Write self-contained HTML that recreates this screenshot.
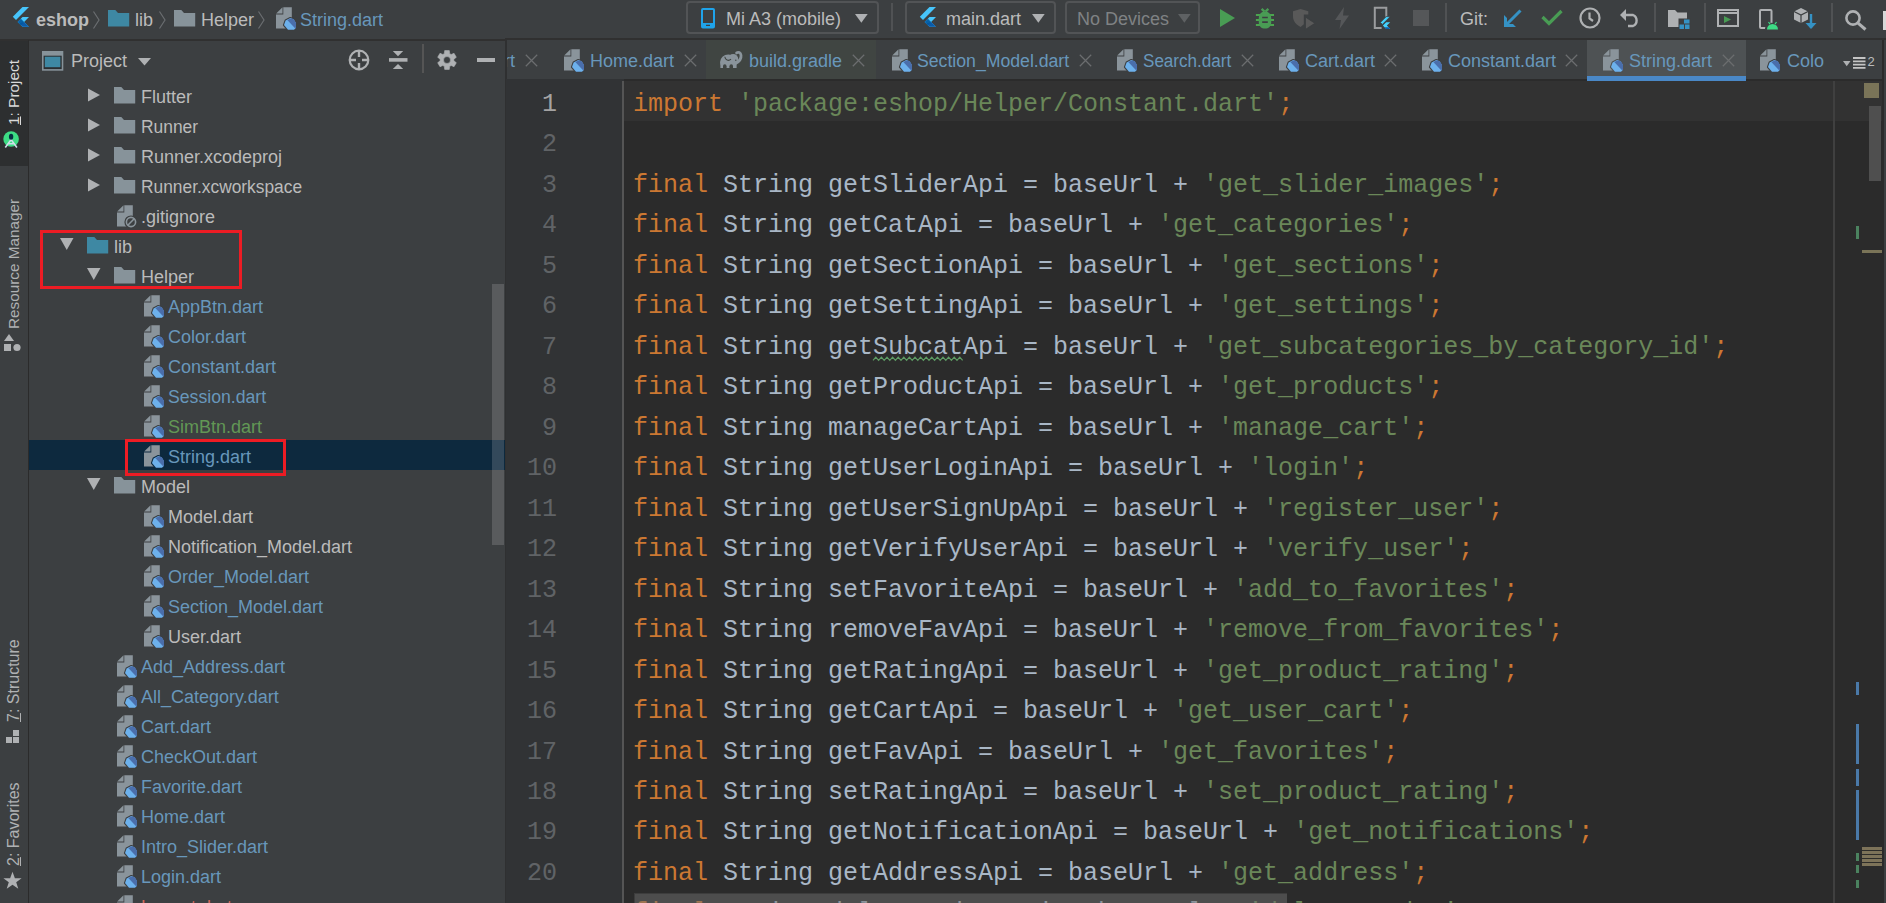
<!DOCTYPE html><html><head><meta charset="utf-8"><style>
*{margin:0;padding:0;box-sizing:border-box}
html,body{width:1886px;height:903px;overflow:hidden;background:#3C3F41;font-family:"Liberation Sans", sans-serif;}
.a{position:absolute}
.t{position:absolute;white-space:pre;font-size:18px;line-height:30px;color:#BBBBBB}
.c{position:absolute;white-space:pre;font-family:"Liberation Mono", monospace;font-size:25px;line-height:40.47px;color:#A9B7C6;left:633px}
.k{color:#CC7832} .s{color:#6A8759}
.ln{position:absolute;white-space:pre;font-family:"Liberation Mono", monospace;font-size:25px;line-height:40.47px;color:#606366;text-align:right;width:60px;left:497px}
svg{position:absolute;overflow:visible}
</style></head><body>

<div class="a" style="left:0;top:0;width:1886px;height:38px;background:#3C3F41"></div>
<div class="a" style="left:505px;top:38px;width:1381px;height:2px;background:#303030"></div>
<div class="a" style="left:0;top:39px;width:507px;height:2px;background:#303030"></div>
<div class="a" style="left:0;top:41px;width:28px;height:862px;background:#3C3F41"></div>
<div class="a" style="left:0;top:41px;width:28px;height:125px;background:#2D2F30"></div>
<div class="a" style="left:28px;top:40px;width:1px;height:863px;background:#2B2B2B"></div>
<div class="a" style="left:29px;top:41px;width:476px;height:862px;background:#3C3F41"></div>
<div class="a" style="left:505px;top:40px;width:2px;height:863px;background:#2F3031"></div>
<div class="a" style="left:507px;top:40px;width:1379px;height:39px;background:#3C3F41"></div>
<div class="a" style="left:506px;top:79px;width:118px;height:824px;background:#313335"></div>
<div class="a" style="left:624px;top:79px;width:1258px;height:824px;background:#2B2B2B"></div>
<div class="a" style="left:1882px;top:40px;width:2px;height:863px;background:#2B2B2B"></div>
<div class="a" style="left:1884px;top:40px;width:2px;height:863px;background:#3C3F41"></div>
<div class="a" style="left:624px;top:81px;width:1258px;height:40px;background:#323232"></div>
<div class="a" style="left:1833px;top:81px;width:2px;height:822px;background:#404040"></div>
<div class="a" style="left:622px;top:81px;width:2px;height:822px;background:#555555"></div>
<div class="ln" style="top:85.00px;color:#A4A3A3">1</div>
<div class="c" style="top:85.00px"><span class="k">import</span> <span class="s">'package:eshop/Helper/Constant.dart'</span><span class="k">;</span></div>
<div class="ln" style="top:125.47px;color:#606366">2</div>
<div class="ln" style="top:165.94px;color:#606366">3</div>
<div class="c" style="top:165.94px"><span class="k">final</span> String getSliderApi = baseUrl + <span class="s">'get_slider_images'</span><span class="k">;</span></div>
<div class="ln" style="top:206.41px;color:#606366">4</div>
<div class="c" style="top:206.41px"><span class="k">final</span> String getCatApi = baseUrl + <span class="s">'get_categories'</span><span class="k">;</span></div>
<div class="ln" style="top:246.88px;color:#606366">5</div>
<div class="c" style="top:246.88px"><span class="k">final</span> String getSectionApi = baseUrl + <span class="s">'get_sections'</span><span class="k">;</span></div>
<div class="ln" style="top:287.35px;color:#606366">6</div>
<div class="c" style="top:287.35px"><span class="k">final</span> String getSettingApi = baseUrl + <span class="s">'get_settings'</span><span class="k">;</span></div>
<div class="ln" style="top:327.82px;color:#606366">7</div>
<div class="c" style="top:327.82px"><span class="k">final</span> String getSubcatApi = baseUrl + <span class="s">'get_subcategories_by_category_id'</span><span class="k">;</span></div>
<div class="ln" style="top:368.29px;color:#606366">8</div>
<div class="c" style="top:368.29px"><span class="k">final</span> String getProductApi = baseUrl + <span class="s">'get_products'</span><span class="k">;</span></div>
<div class="ln" style="top:408.76px;color:#606366">9</div>
<div class="c" style="top:408.76px"><span class="k">final</span> String manageCartApi = baseUrl + <span class="s">'manage_cart'</span><span class="k">;</span></div>
<div class="ln" style="top:449.23px;color:#606366">10</div>
<div class="c" style="top:449.23px"><span class="k">final</span> String getUserLoginApi = baseUrl + <span class="s">'login'</span><span class="k">;</span></div>
<div class="ln" style="top:489.70px;color:#606366">11</div>
<div class="c" style="top:489.70px"><span class="k">final</span> String getUserSignUpApi = baseUrl + <span class="s">'register_user'</span><span class="k">;</span></div>
<div class="ln" style="top:530.17px;color:#606366">12</div>
<div class="c" style="top:530.17px"><span class="k">final</span> String getVerifyUserApi = baseUrl + <span class="s">'verify_user'</span><span class="k">;</span></div>
<div class="ln" style="top:570.64px;color:#606366">13</div>
<div class="c" style="top:570.64px"><span class="k">final</span> String setFavoriteApi = baseUrl + <span class="s">'add_to_favorites'</span><span class="k">;</span></div>
<div class="ln" style="top:611.11px;color:#606366">14</div>
<div class="c" style="top:611.11px"><span class="k">final</span> String removeFavApi = baseUrl + <span class="s">'remove_from_favorites'</span><span class="k">;</span></div>
<div class="ln" style="top:651.58px;color:#606366">15</div>
<div class="c" style="top:651.58px"><span class="k">final</span> String getRatingApi = baseUrl + <span class="s">'get_product_rating'</span><span class="k">;</span></div>
<div class="ln" style="top:692.05px;color:#606366">16</div>
<div class="c" style="top:692.05px"><span class="k">final</span> String getCartApi = baseUrl + <span class="s">'get_user_cart'</span><span class="k">;</span></div>
<div class="ln" style="top:732.52px;color:#606366">17</div>
<div class="c" style="top:732.52px"><span class="k">final</span> String getFavApi = baseUrl + <span class="s">'get_favorites'</span><span class="k">;</span></div>
<div class="ln" style="top:772.99px;color:#606366">18</div>
<div class="c" style="top:772.99px"><span class="k">final</span> String setRatingApi = baseUrl + <span class="s">'set_product_rating'</span><span class="k">;</span></div>
<div class="ln" style="top:813.46px;color:#606366">19</div>
<div class="c" style="top:813.46px"><span class="k">final</span> String getNotificationApi = baseUrl + <span class="s">'get_notifications'</span><span class="k">;</span></div>
<div class="ln" style="top:853.93px;color:#606366">20</div>
<div class="c" style="top:853.93px"><span class="k">final</span> String getAddressApi = baseUrl + <span class="s">'get_address'</span><span class="k">;</span></div>
<div class="c" style="top:894.40px"><span class="k">final</span> String deleteOrdersApi = baseUrl + <span class="s">'delete_order'</span><span class="k">;</span></div>
<svg style="left:0;top:0" width="1" height="1"><path d="M873 360.3 L875.8 357.2 L878.6 360.3 L881.4 357.2 L884.2 360.3 L887.0 357.2 L889.8 360.3 L892.6 357.2 L895.4 360.3 L898.2 357.2 L901.0 360.3 L903.8 357.2 L906.6 360.3 L909.4 357.2 L912.2 360.3 L915.0 357.2 L917.8 360.3 L920.6 357.2 L923.4 360.3 L926.2 357.2 L929.0 360.3 L931.8 357.2 L934.6 360.3 L937.4 357.2 L940.2 360.3 L943.0 357.2 L945.8 360.3 L948.6 357.2 L951.4 360.3 L954.2 357.2 L957.0 360.3 L959.8 357.2 L962.6 360.3" stroke="#5E9C64" stroke-width="1.2" fill="none"/></svg>
<div class="a" style="left:634px;top:893px;width:653px;height:10px;background:rgba(112,112,112,0.5);border-left:1px solid rgba(0,0,0,0.2);border-top:1px solid rgba(0,0,0,0.2)"></div>
<div class="a" style="left:1864px;top:83px;width:15px;height:15px;background:#7A7458"></div>
<div class="a" style="left:1869px;top:106px;width:12px;height:75px;background:#4F4F4F"></div>
<div class="a" style="left:1856px;top:226px;width:3px;height:13px;background:#4B825F"></div>
<div class="a" style="left:1856px;top:682px;width:3px;height:13px;background:#4A79A8"></div>
<div class="a" style="left:1856px;top:724px;width:3px;height:40px;background:#4A79A8"></div>
<div class="a" style="left:1856px;top:769px;width:3px;height:17px;background:#4A79A8"></div>
<div class="a" style="left:1856px;top:790px;width:3px;height:50px;background:#4A79A8"></div>
<div class="a" style="left:1856px;top:853px;width:3px;height:8px;background:#4B825F"></div>
<div class="a" style="left:1856px;top:865px;width:3px;height:8px;background:#4B825F"></div>
<div class="a" style="left:1856px;top:880px;width:3px;height:8px;background:#4B825F"></div>
<div class="a" style="left:1862px;top:250px;width:20px;height:3px;background:#7A7458"></div>
<div class="a" style="left:1862px;top:847px;width:20px;height:19px;background:#2E2D2A"></div>
<div class="a" style="left:1862px;top:847.3px;width:20px;height:3px;background:#7D7359"></div>
<div class="a" style="left:1862px;top:850.6px;width:20px;height:3px;background:#7D7359"></div>
<div class="a" style="left:1862px;top:854.9px;width:20px;height:3px;background:#7D7359"></div>
<div class="a" style="left:1862px;top:859.3px;width:20px;height:3px;background:#7D7359"></div>
<div class="a" style="left:1862px;top:862.6px;width:20px;height:3px;background:#7D7359"></div>
<div class="a" style="left:29px;top:440px;width:476px;height:30px;background:#0D293E"></div>
<div class="a" style="left:492px;top:284px;width:12px;height:261px;background:#595B5D"></div>
<div class="a" style="left:492px;top:440px;width:12px;height:30px;background:#33495B"></div>
<svg style="left:87.8px;top:87.5px" width="13" height="14"><path d="M0 0.5L12 7L0 13.5Z" fill="#AFB1B3"/></svg>
<svg style="left:114.4px;top:87px" width="22" height="17" fill="#87939A"><path d="M0 0H7.3L10 2.9H21.2V16.4H0Z"/></svg>
<div class="t" style="left:141px;top:81.8px;color:#BBBBBB">Flutter</div>
<svg style="left:87.8px;top:117.5px" width="13" height="14"><path d="M0 0.5L12 7L0 13.5Z" fill="#AFB1B3"/></svg>
<svg style="left:114.4px;top:117px" width="22" height="17" fill="#87939A"><path d="M0 0H7.3L10 2.9H21.2V16.4H0Z"/></svg>
<div class="t" style="left:141px;top:111.8px;color:#BBBBBB;transform:scaleX(0.967);transform-origin:0 0">Runner</div>
<svg style="left:87.8px;top:147.5px" width="13" height="14"><path d="M0 0.5L12 7L0 13.5Z" fill="#AFB1B3"/></svg>
<svg style="left:114.4px;top:147px" width="22" height="17" fill="#87939A"><path d="M0 0H7.3L10 2.9H21.2V16.4H0Z"/></svg>
<div class="t" style="left:141px;top:141.8px;color:#BBBBBB">Runner.xcodeproj</div>
<svg style="left:87.8px;top:177.5px" width="13" height="14"><path d="M0 0.5L12 7L0 13.5Z" fill="#AFB1B3"/></svg>
<svg style="left:114.4px;top:177px" width="22" height="17" fill="#87939A"><path d="M0 0H7.3L10 2.9H21.2V16.4H0Z"/></svg>
<div class="t" style="left:141px;top:171.8px;color:#BBBBBB;transform:scaleX(0.964);transform-origin:0 0">Runner.xcworkspace</div>
<svg style="left:117px;top:205px" width="22" height="24"><path fill="#8A949B" d="M7.3 0.3H15.8V21.6H0V7.6H7.3Z"/><path fill="#8A949B" d="M0.2 6.6L6.5 0.3V6.6Z"/><circle cx="14" cy="17" r="6.6" fill="#3C3F41"/><circle cx="14" cy="17" r="4.6" fill="none" stroke="#8A949B" stroke-width="1.6"/><path d="M10.8 20.2L17.2 13.8" stroke="#8A949B" stroke-width="1.6"/></svg>
<div class="t" style="left:141px;top:201.8px;color:#BBBBBB">.gitignore</div>
<svg style="left:60px;top:238px" width="14" height="13"><path d="M0 0L13.5 0L6.75 12Z" fill="#AFB1B3"/></svg>
<svg style="left:87.4px;top:237px" width="22" height="17" fill="#3E88A3"><path d="M0 0H7.3L10 2.9H21.2V16.4H0Z"/></svg>
<div class="t" style="left:114px;top:231.8px;color:#BBBBBB">lib</div>
<svg style="left:87px;top:268px" width="14" height="13"><path d="M0 0L13.5 0L6.75 12Z" fill="#AFB1B3"/></svg>
<svg style="left:114.4px;top:267px" width="22" height="17" fill="#87939A"><path d="M0 0H7.3L10 2.9H21.2V16.4H0Z"/></svg>
<div class="t" style="left:141px;top:261.8px;color:#BBBBBB">Helper</div>
<svg style="left:144px;top:295px" width="22" height="24"><path fill="#8A949B" d="M7.3 0.3H15.8V21.6H0V7.6H7.3Z"/><path fill="#8A949B" d="M0.2 6.6L6.5 0.3V6.6Z"/><path d="M14.3 11L17.5 12.3L20 16.3V20.8L18 22.8H12L8 18L9.6 13.5Z" fill="var(--bg,#3C3F41)" stroke="var(--bg,#3C3F41)" stroke-width="2.2" stroke-linejoin="round"/><path d="M14.3 11L17.5 12.3L20 16.3V20.8L18 22.8H12L8 18L9.6 13.5Z" fill="#6DB1EC"/><path d="M11.3 13.1L15.2 11.3L18 12.5L20 16V20.6L19.3 21.4Z" fill="#4A6EAB"/></svg>
<div class="t" style="left:168px;top:291.8px;color:#6897BB">AppBtn.dart</div>
<svg style="left:144px;top:325px" width="22" height="24"><path fill="#8A949B" d="M7.3 0.3H15.8V21.6H0V7.6H7.3Z"/><path fill="#8A949B" d="M0.2 6.6L6.5 0.3V6.6Z"/><path d="M14.3 11L17.5 12.3L20 16.3V20.8L18 22.8H12L8 18L9.6 13.5Z" fill="var(--bg,#3C3F41)" stroke="var(--bg,#3C3F41)" stroke-width="2.2" stroke-linejoin="round"/><path d="M14.3 11L17.5 12.3L20 16.3V20.8L18 22.8H12L8 18L9.6 13.5Z" fill="#6DB1EC"/><path d="M11.3 13.1L15.2 11.3L18 12.5L20 16V20.6L19.3 21.4Z" fill="#4A6EAB"/></svg>
<div class="t" style="left:168px;top:321.8px;color:#6897BB">Color.dart</div>
<svg style="left:144px;top:355px" width="22" height="24"><path fill="#8A949B" d="M7.3 0.3H15.8V21.6H0V7.6H7.3Z"/><path fill="#8A949B" d="M0.2 6.6L6.5 0.3V6.6Z"/><path d="M14.3 11L17.5 12.3L20 16.3V20.8L18 22.8H12L8 18L9.6 13.5Z" fill="var(--bg,#3C3F41)" stroke="var(--bg,#3C3F41)" stroke-width="2.2" stroke-linejoin="round"/><path d="M14.3 11L17.5 12.3L20 16.3V20.8L18 22.8H12L8 18L9.6 13.5Z" fill="#6DB1EC"/><path d="M11.3 13.1L15.2 11.3L18 12.5L20 16V20.6L19.3 21.4Z" fill="#4A6EAB"/></svg>
<div class="t" style="left:168px;top:351.8px;color:#6897BB">Constant.dart</div>
<svg style="left:144px;top:385px" width="22" height="24"><path fill="#8A949B" d="M7.3 0.3H15.8V21.6H0V7.6H7.3Z"/><path fill="#8A949B" d="M0.2 6.6L6.5 0.3V6.6Z"/><path d="M14.3 11L17.5 12.3L20 16.3V20.8L18 22.8H12L8 18L9.6 13.5Z" fill="var(--bg,#3C3F41)" stroke="var(--bg,#3C3F41)" stroke-width="2.2" stroke-linejoin="round"/><path d="M14.3 11L17.5 12.3L20 16.3V20.8L18 22.8H12L8 18L9.6 13.5Z" fill="#6DB1EC"/><path d="M11.3 13.1L15.2 11.3L18 12.5L20 16V20.6L19.3 21.4Z" fill="#4A6EAB"/></svg>
<div class="t" style="left:168px;top:381.8px;color:#6897BB;transform:scaleX(0.98);transform-origin:0 0">Session.dart</div>
<svg style="left:144px;top:415px" width="22" height="24"><path fill="#8A949B" d="M7.3 0.3H15.8V21.6H0V7.6H7.3Z"/><path fill="#8A949B" d="M0.2 6.6L6.5 0.3V6.6Z"/><path d="M14.3 11L17.5 12.3L20 16.3V20.8L18 22.8H12L8 18L9.6 13.5Z" fill="var(--bg,#3C3F41)" stroke="var(--bg,#3C3F41)" stroke-width="2.2" stroke-linejoin="round"/><path d="M14.3 11L17.5 12.3L20 16.3V20.8L18 22.8H12L8 18L9.6 13.5Z" fill="#6DB1EC"/><path d="M11.3 13.1L15.2 11.3L18 12.5L20 16V20.6L19.3 21.4Z" fill="#4A6EAB"/></svg>
<div class="t" style="left:168px;top:411.8px;color:#629755">SimBtn.dart</div>
<svg style="left:144px;top:445px;--bg:#0D293E" width="22" height="24"><path fill="#8A949B" d="M7.3 0.3H15.8V21.6H0V7.6H7.3Z"/><path fill="#8A949B" d="M0.2 6.6L6.5 0.3V6.6Z"/><path d="M14.3 11L17.5 12.3L20 16.3V20.8L18 22.8H12L8 18L9.6 13.5Z" fill="var(--bg,#3C3F41)" stroke="var(--bg,#3C3F41)" stroke-width="2.2" stroke-linejoin="round"/><path d="M14.3 11L17.5 12.3L20 16.3V20.8L18 22.8H12L8 18L9.6 13.5Z" fill="#6DB1EC"/><path d="M11.3 13.1L15.2 11.3L18 12.5L20 16V20.6L19.3 21.4Z" fill="#4A6EAB"/></svg>
<div class="t" style="left:168px;top:441.8px;color:#6897BB">String.dart</div>
<svg style="left:87px;top:478px" width="14" height="13"><path d="M0 0L13.5 0L6.75 12Z" fill="#AFB1B3"/></svg>
<svg style="left:114.4px;top:477px" width="22" height="17" fill="#87939A"><path d="M0 0H7.3L10 2.9H21.2V16.4H0Z"/></svg>
<div class="t" style="left:141px;top:471.8px;color:#BBBBBB">Model</div>
<svg style="left:144px;top:505px" width="22" height="24"><path fill="#8A949B" d="M7.3 0.3H15.8V21.6H0V7.6H7.3Z"/><path fill="#8A949B" d="M0.2 6.6L6.5 0.3V6.6Z"/><path d="M14.3 11L17.5 12.3L20 16.3V20.8L18 22.8H12L8 18L9.6 13.5Z" fill="var(--bg,#3C3F41)" stroke="var(--bg,#3C3F41)" stroke-width="2.2" stroke-linejoin="round"/><path d="M14.3 11L17.5 12.3L20 16.3V20.8L18 22.8H12L8 18L9.6 13.5Z" fill="#6DB1EC"/><path d="M11.3 13.1L15.2 11.3L18 12.5L20 16V20.6L19.3 21.4Z" fill="#4A6EAB"/></svg>
<div class="t" style="left:168px;top:501.8px;color:#BBBBBB">Model.dart</div>
<svg style="left:144px;top:535px" width="22" height="24"><path fill="#8A949B" d="M7.3 0.3H15.8V21.6H0V7.6H7.3Z"/><path fill="#8A949B" d="M0.2 6.6L6.5 0.3V6.6Z"/><path d="M14.3 11L17.5 12.3L20 16.3V20.8L18 22.8H12L8 18L9.6 13.5Z" fill="var(--bg,#3C3F41)" stroke="var(--bg,#3C3F41)" stroke-width="2.2" stroke-linejoin="round"/><path d="M14.3 11L17.5 12.3L20 16.3V20.8L18 22.8H12L8 18L9.6 13.5Z" fill="#6DB1EC"/><path d="M11.3 13.1L15.2 11.3L18 12.5L20 16V20.6L19.3 21.4Z" fill="#4A6EAB"/></svg>
<div class="t" style="left:168px;top:531.8px;color:#BBBBBB">Notification_Model.dart</div>
<svg style="left:144px;top:565px" width="22" height="24"><path fill="#8A949B" d="M7.3 0.3H15.8V21.6H0V7.6H7.3Z"/><path fill="#8A949B" d="M0.2 6.6L6.5 0.3V6.6Z"/><path d="M14.3 11L17.5 12.3L20 16.3V20.8L18 22.8H12L8 18L9.6 13.5Z" fill="var(--bg,#3C3F41)" stroke="var(--bg,#3C3F41)" stroke-width="2.2" stroke-linejoin="round"/><path d="M14.3 11L17.5 12.3L20 16.3V20.8L18 22.8H12L8 18L9.6 13.5Z" fill="#6DB1EC"/><path d="M11.3 13.1L15.2 11.3L18 12.5L20 16V20.6L19.3 21.4Z" fill="#4A6EAB"/></svg>
<div class="t" style="left:168px;top:561.8px;color:#6897BB">Order_Model.dart</div>
<svg style="left:144px;top:595px" width="22" height="24"><path fill="#8A949B" d="M7.3 0.3H15.8V21.6H0V7.6H7.3Z"/><path fill="#8A949B" d="M0.2 6.6L6.5 0.3V6.6Z"/><path d="M14.3 11L17.5 12.3L20 16.3V20.8L18 22.8H12L8 18L9.6 13.5Z" fill="var(--bg,#3C3F41)" stroke="var(--bg,#3C3F41)" stroke-width="2.2" stroke-linejoin="round"/><path d="M14.3 11L17.5 12.3L20 16.3V20.8L18 22.8H12L8 18L9.6 13.5Z" fill="#6DB1EC"/><path d="M11.3 13.1L15.2 11.3L18 12.5L20 16V20.6L19.3 21.4Z" fill="#4A6EAB"/></svg>
<div class="t" style="left:168px;top:591.8px;color:#6897BB">Section_Model.dart</div>
<svg style="left:144px;top:625px" width="22" height="24"><path fill="#8A949B" d="M7.3 0.3H15.8V21.6H0V7.6H7.3Z"/><path fill="#8A949B" d="M0.2 6.6L6.5 0.3V6.6Z"/><path d="M14.3 11L17.5 12.3L20 16.3V20.8L18 22.8H12L8 18L9.6 13.5Z" fill="var(--bg,#3C3F41)" stroke="var(--bg,#3C3F41)" stroke-width="2.2" stroke-linejoin="round"/><path d="M14.3 11L17.5 12.3L20 16.3V20.8L18 22.8H12L8 18L9.6 13.5Z" fill="#6DB1EC"/><path d="M11.3 13.1L15.2 11.3L18 12.5L20 16V20.6L19.3 21.4Z" fill="#4A6EAB"/></svg>
<div class="t" style="left:168px;top:621.8px;color:#BBBBBB">User.dart</div>
<svg style="left:117px;top:655px" width="22" height="24"><path fill="#8A949B" d="M7.3 0.3H15.8V21.6H0V7.6H7.3Z"/><path fill="#8A949B" d="M0.2 6.6L6.5 0.3V6.6Z"/><path d="M14.3 11L17.5 12.3L20 16.3V20.8L18 22.8H12L8 18L9.6 13.5Z" fill="var(--bg,#3C3F41)" stroke="var(--bg,#3C3F41)" stroke-width="2.2" stroke-linejoin="round"/><path d="M14.3 11L17.5 12.3L20 16.3V20.8L18 22.8H12L8 18L9.6 13.5Z" fill="#6DB1EC"/><path d="M11.3 13.1L15.2 11.3L18 12.5L20 16V20.6L19.3 21.4Z" fill="#4A6EAB"/></svg>
<div class="t" style="left:141px;top:651.8px;color:#6897BB">Add_Address.dart</div>
<svg style="left:117px;top:685px" width="22" height="24"><path fill="#8A949B" d="M7.3 0.3H15.8V21.6H0V7.6H7.3Z"/><path fill="#8A949B" d="M0.2 6.6L6.5 0.3V6.6Z"/><path d="M14.3 11L17.5 12.3L20 16.3V20.8L18 22.8H12L8 18L9.6 13.5Z" fill="var(--bg,#3C3F41)" stroke="var(--bg,#3C3F41)" stroke-width="2.2" stroke-linejoin="round"/><path d="M14.3 11L17.5 12.3L20 16.3V20.8L18 22.8H12L8 18L9.6 13.5Z" fill="#6DB1EC"/><path d="M11.3 13.1L15.2 11.3L18 12.5L20 16V20.6L19.3 21.4Z" fill="#4A6EAB"/></svg>
<div class="t" style="left:141px;top:681.8px;color:#6897BB">All_Category.dart</div>
<svg style="left:117px;top:715px" width="22" height="24"><path fill="#8A949B" d="M7.3 0.3H15.8V21.6H0V7.6H7.3Z"/><path fill="#8A949B" d="M0.2 6.6L6.5 0.3V6.6Z"/><path d="M14.3 11L17.5 12.3L20 16.3V20.8L18 22.8H12L8 18L9.6 13.5Z" fill="var(--bg,#3C3F41)" stroke="var(--bg,#3C3F41)" stroke-width="2.2" stroke-linejoin="round"/><path d="M14.3 11L17.5 12.3L20 16.3V20.8L18 22.8H12L8 18L9.6 13.5Z" fill="#6DB1EC"/><path d="M11.3 13.1L15.2 11.3L18 12.5L20 16V20.6L19.3 21.4Z" fill="#4A6EAB"/></svg>
<div class="t" style="left:141px;top:711.8px;color:#6897BB">Cart.dart</div>
<svg style="left:117px;top:745px" width="22" height="24"><path fill="#8A949B" d="M7.3 0.3H15.8V21.6H0V7.6H7.3Z"/><path fill="#8A949B" d="M0.2 6.6L6.5 0.3V6.6Z"/><path d="M14.3 11L17.5 12.3L20 16.3V20.8L18 22.8H12L8 18L9.6 13.5Z" fill="var(--bg,#3C3F41)" stroke="var(--bg,#3C3F41)" stroke-width="2.2" stroke-linejoin="round"/><path d="M14.3 11L17.5 12.3L20 16.3V20.8L18 22.8H12L8 18L9.6 13.5Z" fill="#6DB1EC"/><path d="M11.3 13.1L15.2 11.3L18 12.5L20 16V20.6L19.3 21.4Z" fill="#4A6EAB"/></svg>
<div class="t" style="left:141px;top:741.8px;color:#6897BB">CheckOut.dart</div>
<svg style="left:117px;top:775px" width="22" height="24"><path fill="#8A949B" d="M7.3 0.3H15.8V21.6H0V7.6H7.3Z"/><path fill="#8A949B" d="M0.2 6.6L6.5 0.3V6.6Z"/><path d="M14.3 11L17.5 12.3L20 16.3V20.8L18 22.8H12L8 18L9.6 13.5Z" fill="var(--bg,#3C3F41)" stroke="var(--bg,#3C3F41)" stroke-width="2.2" stroke-linejoin="round"/><path d="M14.3 11L17.5 12.3L20 16.3V20.8L18 22.8H12L8 18L9.6 13.5Z" fill="#6DB1EC"/><path d="M11.3 13.1L15.2 11.3L18 12.5L20 16V20.6L19.3 21.4Z" fill="#4A6EAB"/></svg>
<div class="t" style="left:141px;top:771.8px;color:#6897BB">Favorite.dart</div>
<svg style="left:117px;top:805px" width="22" height="24"><path fill="#8A949B" d="M7.3 0.3H15.8V21.6H0V7.6H7.3Z"/><path fill="#8A949B" d="M0.2 6.6L6.5 0.3V6.6Z"/><path d="M14.3 11L17.5 12.3L20 16.3V20.8L18 22.8H12L8 18L9.6 13.5Z" fill="var(--bg,#3C3F41)" stroke="var(--bg,#3C3F41)" stroke-width="2.2" stroke-linejoin="round"/><path d="M14.3 11L17.5 12.3L20 16.3V20.8L18 22.8H12L8 18L9.6 13.5Z" fill="#6DB1EC"/><path d="M11.3 13.1L15.2 11.3L18 12.5L20 16V20.6L19.3 21.4Z" fill="#4A6EAB"/></svg>
<div class="t" style="left:141px;top:801.8px;color:#6897BB">Home.dart</div>
<svg style="left:117px;top:835px" width="22" height="24"><path fill="#8A949B" d="M7.3 0.3H15.8V21.6H0V7.6H7.3Z"/><path fill="#8A949B" d="M0.2 6.6L6.5 0.3V6.6Z"/><path d="M14.3 11L17.5 12.3L20 16.3V20.8L18 22.8H12L8 18L9.6 13.5Z" fill="var(--bg,#3C3F41)" stroke="var(--bg,#3C3F41)" stroke-width="2.2" stroke-linejoin="round"/><path d="M14.3 11L17.5 12.3L20 16.3V20.8L18 22.8H12L8 18L9.6 13.5Z" fill="#6DB1EC"/><path d="M11.3 13.1L15.2 11.3L18 12.5L20 16V20.6L19.3 21.4Z" fill="#4A6EAB"/></svg>
<div class="t" style="left:141px;top:831.8px;color:#6897BB">Intro_Slider.dart</div>
<svg style="left:117px;top:865px" width="22" height="24"><path fill="#8A949B" d="M7.3 0.3H15.8V21.6H0V7.6H7.3Z"/><path fill="#8A949B" d="M0.2 6.6L6.5 0.3V6.6Z"/><path d="M14.3 11L17.5 12.3L20 16.3V20.8L18 22.8H12L8 18L9.6 13.5Z" fill="var(--bg,#3C3F41)" stroke="var(--bg,#3C3F41)" stroke-width="2.2" stroke-linejoin="round"/><path d="M14.3 11L17.5 12.3L20 16.3V20.8L18 22.8H12L8 18L9.6 13.5Z" fill="#6DB1EC"/><path d="M11.3 13.1L15.2 11.3L18 12.5L20 16V20.6L19.3 21.4Z" fill="#4A6EAB"/></svg>
<div class="t" style="left:141px;top:861.8px;color:#6897BB">Login.dart</div>
<svg style="left:117px;top:895px" width="22" height="24"><path fill="#8A949B" d="M7.3 0.3H15.8V21.6H0V7.6H7.3Z"/><path fill="#8A949B" d="M0.2 6.6L6.5 0.3V6.6Z"/><path d="M14.3 11L17.5 12.3L20 16.3V20.8L18 22.8H12L8 18L9.6 13.5Z" fill="var(--bg,#3C3F41)" stroke="var(--bg,#3C3F41)" stroke-width="2.2" stroke-linejoin="round"/><path d="M14.3 11L17.5 12.3L20 16.3V20.8L18 22.8H12L8 18L9.6 13.5Z" fill="#6DB1EC"/><path d="M11.3 13.1L15.2 11.3L18 12.5L20 16V20.6L19.3 21.4Z" fill="#4A6EAB"/></svg>
<div class="t" style="left:141px;top:891.8px;color:#D1675A">Logout.dart</div>
<div class="a" style="left:40px;top:230px;width:202px;height:59px;border:3px solid #ED1C24"></div>
<div class="a" style="left:125px;top:439px;width:161px;height:37px;border:3px solid #ED1C24"></div>
<svg style="left:42.4px;top:51px" width="22" height="20"><rect x="0" y="0" width="21.3" height="19.7" fill="#87939A"/><rect x="1.6" y="4.7" width="18.1" height="13.4" fill="#2B2E30"/><rect x="2.8" y="5.7" width="15.6" height="10.5" fill="#3E88A3"/></svg>
<div class="t" style="left:71px;top:45.8px">Project</div>
<svg style="left:137.5px;top:58px" width="14" height="9"><path d="M0 0H13L6.5 7.5Z" fill="#AFB1B3"/></svg>
<svg style="left:348px;top:49px" width="22" height="22"><circle cx="11" cy="11" r="9.3" fill="none" stroke="#AFB1B3" stroke-width="2.2"/><path d="M11 2V8M11 14V20M2 11H8M14 11H20" stroke="#AFB1B3" stroke-width="2.4"/></svg>
<svg style="left:389px;top:50px" width="19" height="20"><path d="M0 9.9H18.5" stroke="#AFB1B3" stroke-width="3.6"/><path d="M3.8 1H14.2L9 6.2Z M3.8 19.1H14.2L9 13.9Z" fill="#AFB1B3"/></svg>
<div class="a" style="left:422px;top:44px;width:2px;height:29px;background:#555555"></div>
<svg style="left:437px;top:50px" width="20" height="20" viewBox="0 0 20 20"><path fill="#AFB1B3" fill-rule="evenodd" stroke="#AFB1B3" stroke-width="0.6" stroke-linejoin="round" d="M16.85 10.85 L19.31 12.71 L17.01 16.71 L14.16 15.50 L12.69 16.36 L12.31 19.42 L7.69 19.42 L7.31 16.36 L5.84 15.50 L2.99 16.71 L0.69 12.71 L3.15 10.85 L3.15 9.15 L0.69 7.29 L2.99 3.29 L5.84 4.50 L7.31 3.64 L7.69 0.58 L12.31 0.58 L12.69 3.64 L14.16 4.50 L17.01 3.29 L19.31 7.29 L16.85 9.15Z M10 6.5A3.5 3.5 0 1 0 10 13.5A3.5 3.5 0 1 0 10 6.5Z"/></svg>
<div class="a" style="left:477px;top:58.2px;width:18px;height:3.6px;background:#AFB1B3"></div>
<div class="a" style="left:3px;top:125px;width:70px;height:22px;transform-origin:0 0;transform:rotate(-90deg);font-size:15.4px;line-height:22px;color:#DADADA;white-space:pre"><u>1</u>: Project</div>
<svg style="left:2px;top:130px" width="20" height="20"><circle cx="9.1" cy="9" r="7.8" fill="#3DDC84"/><path d="M3.3 17.5L9.1 9.5L14.9 17.5M5.8 13.8H12.4" stroke="#D0DDEA" stroke-width="1.6" fill="none"/><ellipse cx="9.1" cy="6.8" rx="2.2" ry="3" fill="#073042"/></svg>
<div class="a" style="left:3px;top:329px;width:132px;height:22px;transform-origin:0 0;transform:rotate(-90deg);font-size:15.3px;line-height:22px;color:#AFB1B3;white-space:pre">Resource Manager</div>
<svg style="left:4px;top:334px" width="17" height="18"><path d="M5 0L10 7H0Z" fill="#AFB1B3"/><rect x="0" y="10" width="7" height="7" fill="#AFB1B3"/><circle cx="13" cy="13.5" r="3.6" fill="#AFB1B3"/></svg>
<div class="a" style="left:3px;top:722px;width:84px;height:22px;transform-origin:0 0;transform:rotate(-90deg);font-size:16px;line-height:22px;color:#AFB1B3;white-space:pre"><u>7</u>: Structure</div>
<svg style="left:6px;top:730px" width="14" height="14"><rect x="7" y="0" width="6" height="6" fill="#AFB1B3"/><rect x="0" y="7" width="6" height="6" fill="#AFB1B3"/><rect x="7" y="7" width="6" height="6" fill="#AFB1B3"/></svg>
<div class="a" style="left:3px;top:866px;width:82px;height:22px;transform-origin:0 0;transform:rotate(-90deg);font-size:16px;line-height:22px;color:#AFB1B3;white-space:pre"><u>2</u>: Favorites</div>
<svg style="left:3px;top:871px" width="19" height="19" viewBox="0 0 24 24"><path d="M12 1L15 9H23.5L16.7 14.2L19.3 22.5L12 17.4L4.7 22.5L7.3 14.2L0.5 9H9Z" fill="#AFB1B3"/></svg>
<svg style="left:11px;top:7px" width="18" height="22" viewBox="0 0 18 22"><path d="M11.5 0H18L5 13L1.8 9.8Z" fill="#47C5FB"/><path d="M18 10H11.5L6.6 14.9L11.5 19.8H18L13.1 14.9Z" fill="#47C5FB"/><path d="M8.3 16.6L11.5 19.8H18L13.1 14.9Z" fill="#0B5AA8"/><path d="M6.6 14.9L9.9 11.7L13.1 14.9L9.9 18.2Z" fill="#00569E" opacity="0.9"/></svg>
<div class="t" style="left:36px;top:4.5px;font-weight:bold;color:#BBBBBB">eshop</div>
<svg style="left:93px;top:11px" width="7" height="18"><path d="M0.5 0.5L6 9L0.5 17.5" stroke="#6A6D70" stroke-width="1.2" fill="none"/></svg>
<svg style="left:108px;top:9.5px" width="22" height="17" fill="#3E88A3"><path d="M0 0H7.3L10 2.9H21.2V16.4H0Z"/></svg>
<div class="t" style="left:135px;top:4.5px">lib</div>
<svg style="left:159px;top:11px" width="7" height="18"><path d="M0.5 0.5L6 9L0.5 17.5" stroke="#6A6D70" stroke-width="1.2" fill="none"/></svg>
<svg style="left:174px;top:9.5px" width="22" height="17" fill="#87939A"><path d="M0 0H7.3L10 2.9H21.2V16.4H0Z"/></svg>
<div class="t" style="left:201px;top:4.5px">Helper</div>
<svg style="left:258px;top:11px" width="7" height="18"><path d="M0.5 0.5L6 9L0.5 17.5" stroke="#6A6D70" stroke-width="1.2" fill="none"/></svg>
<svg style="left:276px;top:7px" width="22" height="24"><path fill="#8A949B" d="M7.3 0.3H15.8V21.6H0V7.6H7.3Z"/><path fill="#8A949B" d="M0.2 6.6L6.5 0.3V6.6Z"/><path d="M14.3 11L17.5 12.3L20 16.3V20.8L18 22.8H12L8 18L9.6 13.5Z" fill="var(--bg,#3C3F41)" stroke="var(--bg,#3C3F41)" stroke-width="2.2" stroke-linejoin="round"/><path d="M14.3 11L17.5 12.3L20 16.3V20.8L18 22.8H12L8 18L9.6 13.5Z" fill="#6DB1EC"/><path d="M11.3 13.1L15.2 11.3L18 12.5L20 16V20.6L19.3 21.4Z" fill="#4A6EAB"/></svg>
<div class="t" style="left:300px;top:4.5px;color:#6897BB">String.dart</div>
<div class="a" style="left:686px;top:1px;width:193px;height:33px;border:2px solid #525456;border-radius:4px"></div>
<svg style="left:701px;top:7.5px" width="14" height="21"><path fill="#1FA3EA" fill-rule="evenodd" d="M2 0H12A2 2 0 0 1 14 2V18.5A2 2 0 0 1 12 20.5H2A2 2 0 0 1 0 18.5V2A2 2 0 0 1 2 0Z M2 2V15H12V2Z M5 16.8V18H9V16.8Z"/></svg>
<div class="t" style="left:726px;top:3.5px">Mi A3 (mobile)</div>
<svg style="left:855px;top:13.5px" width="13" height="9"><path d="M0 0H12.7L6.35 8.8Z" fill="#AFB1B3"/></svg>
<div class="a" style="left:891px;top:3px;width:2px;height:28px;background:#505254"></div>
<div class="a" style="left:905px;top:1px;width:151px;height:33px;border:2px solid #525456;border-radius:4px"></div>
<svg style="left:918px;top:7px" width="18" height="22" viewBox="0 0 18 22"><path d="M11.5 0H18L5 13L1.8 9.8Z" fill="#47C5FB"/><path d="M18 10H11.5L6.6 14.9L11.5 19.8H18L13.1 14.9Z" fill="#47C5FB"/><path d="M8.3 16.6L11.5 19.8H18L13.1 14.9Z" fill="#0B5AA8"/><path d="M6.6 14.9L9.9 11.7L13.1 14.9L9.9 18.2Z" fill="#00569E" opacity="0.9"/></svg>
<div class="t" style="left:946px;top:3.5px">main.dart</div>
<svg style="left:1032px;top:13.5px" width="13" height="9"><path d="M0 0H12.7L6.35 8.8Z" fill="#AFB1B3"/></svg>
<div class="a" style="left:1065px;top:1px;width:135px;height:33px;border:2px solid #525456;border-radius:4px"></div>
<div class="t" style="left:1077px;top:3.5px;color:#7F8284">No Devices</div>
<svg style="left:1178px;top:13.5px" width="13" height="9"><path d="M0 0H12.7L6.35 8.8Z" fill="#5E6163"/></svg>
<svg style="left:1220px;top:9px" width="15" height="18"><path d="M0 0L15 9L0 18Z" fill="#499C54"/></svg>
<svg style="left:1250px;top:2px" width="70" height="32" viewBox="0 0 70 32"><path d="M11.6 6.8L14.6 9.6M18.4 6.8L15.4 9.6" stroke="#499C54" stroke-width="2.3"/><path d="M5.9 12H24V14H5.9Z M5.9 17H24V19H5.9Z M5.9 22H24V24H5.9Z" fill="#4CAF50" opacity="0.9"/><path d="M15 9.4C19 9.4 21.2 12.5 21.2 16V20.5C21.2 24.3 18.6 26.6 15 26.6C11.4 26.6 8.8 24.3 8.8 20.5V16C8.8 12.5 11 9.4 15 9.4Z" fill="#499C54"/><path d="M12.2 14.7H17.8V16.3H12.2Z M12.2 19.3H17.8V21H12.2Z" fill="#3C3F41"/><path d="M43 9.2L50.6 7L58.3 9.2V12.6H53.8V22.3L50.6 24.9C46.2 22.6 43 19.4 43 14.5Z" fill="#595959"/><path d="M55.3 14.7L65.3 21.2L55.3 27.7Z" fill="#595959" stroke="#3C3F41" stroke-width="1.2"/></svg>
<svg style="left:1335px;top:7px" width="14" height="22"><path d="M9 0L0 13H6L4.5 22L14 8.5H8Z" fill="#555759"/></svg>
<svg style="left:1373px;top:6px" width="18" height="24"><path d="M13.3 10.8V1.8H1.8V22H8.6" stroke="#9A9C9E" stroke-width="2" fill="none"/><path d="M13.2 10.6H17.2L9.4 18.4L7.4 16.4Z" fill="#44D1FD" stroke="#3C3F41" stroke-width="0.8"/><path d="M13.2 16.3H17.2L13.9 19.6L17.2 22.9H13.2L9.9 19.6Z" fill="#44D1FD"/><path d="M11.6 21.3L13.2 22.9H17.2L15.6 21.3Z" fill="#0F5CAB"/></svg>
<div class="a" style="left:1413px;top:10px;width:16px;height:16px;background:#555759"></div>
<div class="a" style="left:1445px;top:3px;width:2px;height:29px;background:#505254"></div>
<div class="t" style="left:1460px;top:3.5px;color:#BBBBBB">Git:</div>
<svg style="left:1504px;top:9px" width="18" height="18"><path d="M16.5 1.5L2.5 15.5" stroke="#3592C4" stroke-width="3"/><path d="M0 6V18H12L9 15H3V9Z" fill="#3592C4"/></svg>
<svg style="left:1541px;top:9px" width="22" height="17"><path d="M1.5 8L8 14.5L20.5 2" stroke="#499C54" stroke-width="3.2" fill="none"/></svg>
<svg style="left:1579px;top:7px" width="22" height="22"><circle cx="11" cy="11" r="9.5" fill="none" stroke="#AFB1B3" stroke-width="2.2"/><path d="M10.5 5.5V11.5L14 14" stroke="#AFB1B3" stroke-width="2.2" fill="none"/></svg>
<svg style="left:1620px;top:8px" width="21" height="19"><path d="M3 7H13A6 6 0 0 1 13 18H8" stroke="#AFB1B3" stroke-width="2.4" fill="none"/><path d="M0 7L6 1V13Z" fill="#AFB1B3"/></svg>
<div class="a" style="left:1654px;top:3px;width:2px;height:29px;background:#505254"></div>
<svg style="left:1668px;top:10px" width="23" height="19"><path d="M0 0H7L9.5 2.5H19V17H0Z" fill="#AFB1B3"/><rect x="10.5" y="8.5" width="12" height="10.5" fill="#3C3F41"/><rect x="16" y="9.5" width="5.5" height="4" fill="#3592C4"/><rect x="11.5" y="14.5" width="4.5" height="4.5" fill="#3592C4"/><rect x="17" y="14.5" width="4.5" height="4.5" fill="#3592C4"/></svg>
<div class="a" style="left:1704px;top:3px;width:2px;height:29px;background:#505254"></div>
<svg style="left:1717px;top:9px" width="22" height="18"><rect x="1" y="1" width="20" height="16" fill="none" stroke="#AFB1B3" stroke-width="2"/><path d="M1 4H21" stroke="#AFB1B3" stroke-width="2"/><path d="M7 7L14 10.5L7 14Z" fill="#499C54"/></svg>
<svg style="left:1759px;top:9px" width="20" height="21"><rect x="1" y="1" width="11.5" height="18" rx="1" fill="none" stroke="#AFB1B3" stroke-width="2"/><path d="M7 21A6 6 0 0 1 19 21Z" fill="#3C3F41" stroke="#3C3F41" stroke-width="2.5"/><path d="M8 20.5A5.5 5.5 0 0 1 19 20.5Z" fill="#3DDC84"/><path d="M9.5 13L11 15.2M17.5 13L16 15.2" stroke="#3DDC84" stroke-width="1.2"/></svg>
<svg style="left:1794px;top:8px" width="25" height="22"><path d="M7 0L14 3.5V11.5L7 15L0 11.5V3.5Z" fill="#AFB1B3"/><path d="M0 3.5L7 7L14 3.5M7 7V15" stroke="#3C3F41" stroke-width="1.2" fill="none"/><path d="M17 6V20" stroke="#3592C4" stroke-width="2.4"/><path d="M11.5 15L17 21L22.5 15Z" fill="#3592C4"/></svg>
<div class="a" style="left:1831px;top:3px;width:2px;height:29px;background:#505254"></div>
<svg style="left:1845px;top:10px" width="22" height="20"><circle cx="8" cy="8" r="6.6" fill="none" stroke="#AFB1B3" stroke-width="2.6"/><path d="M12.8 12.8L20.5 19.5" stroke="#AFB1B3" stroke-width="3"/></svg>
<div class="a" style="left:1883px;top:11px;width:3px;height:19px;background:#D8D8D8"></div>
<div class="a" style="left:706px;top:40px;width:170px;height:39px;background:#404542"></div>
<div class="a" style="left:1587px;top:40px;width:159px;height:39px;background:#4E5254"></div>
<div class="a" style="left:1587px;top:76px;width:159px;height:4.6px;background:#4A88C7"></div>
<div class="a" style="left:507px;top:40px;width:20px;height:39px;overflow:hidden"><div class="t" style="left:-3px;top:5.5px;color:#6897BB">rt</div></div>
<svg style="left:525px;top:53.5px" width="13" height="13"><path d="M0.8 0.8L12.2 12.2M12.2 0.8L0.8 12.2" stroke="#6B6D6F" stroke-width="1.25"/></svg>
<svg style="left:564px;top:49px" width="22" height="24"><path fill="#8A949B" d="M7.3 0.3H15.8V21.6H0V7.6H7.3Z"/><path fill="#8A949B" d="M0.2 6.6L6.5 0.3V6.6Z"/><path d="M14.3 11L17.5 12.3L20 16.3V20.8L18 22.8H12L8 18L9.6 13.5Z" fill="var(--bg,#3C3F41)" stroke="var(--bg,#3C3F41)" stroke-width="2.2" stroke-linejoin="round"/><path d="M14.3 11L17.5 12.3L20 16.3V20.8L18 22.8H12L8 18L9.6 13.5Z" fill="#6DB1EC"/><path d="M11.3 13.1L15.2 11.3L18 12.5L20 16V20.6L19.3 21.4Z" fill="#4A6EAB"/></svg>
<div class="t" style="left:590px;top:45.5px;color:#6897BB">Home.dart</div>
<svg style="left:684px;top:53.5px" width="13" height="13"><path d="M0.8 0.8L12.2 12.2M12.2 0.8L0.8 12.2" stroke="#6B6D6F" stroke-width="1.25"/></svg>
<svg style="left:720px;top:50px" width="24" height="19" viewBox="0 0 24 19"><defs><clipPath id="gcl"><rect x="-1" y="0" width="26" height="17.9"/></clipPath></defs><g clip-path="url(#gcl)" fill="#8A949B"><ellipse cx="8.3" cy="12" rx="8.2" ry="7.6"/><path d="M0.4 12H16.6V18H0.4Z"/><circle cx="13.2" cy="9.2" r="5.1"/><path d="M15.5 13.5C19.3 11.5 21.4 8.3 21 5.1C20.6 2.6 18.4 1.6 16.6 2.9" stroke="#8A949B" stroke-width="2.8" fill="none" stroke-linecap="round"/><path d="M3 18.5V17.2A1.75 1.75 0 0 1 6.5 17.2V18.5Z M9.5 18.5V17.2A1.75 1.75 0 0 1 13 17.2V18.5Z" fill="#404542" transform="translate(0,-1.2)"/><rect x="3" y="16.5" width="3.5" height="3" fill="#404542"/><rect x="9.5" y="16.5" width="3.5" height="3" fill="#404542"/><path d="M4.8 6.8C5.2 10 8.5 11.5 11 9.2" stroke="#404542" stroke-width="1.1" fill="none"/><circle cx="15.8" cy="10.3" r="0.7" fill="#404542"/></g></svg>
<div class="t" style="left:749px;top:45.5px;color:#6897BB">build.gradle</div>
<svg style="left:852px;top:53.5px" width="13" height="13"><path d="M0.8 0.8L12.2 12.2M12.2 0.8L0.8 12.2" stroke="#6B6D6F" stroke-width="1.25"/></svg>
<svg style="left:892px;top:49px" width="22" height="24"><path fill="#8A949B" d="M7.3 0.3H15.8V21.6H0V7.6H7.3Z"/><path fill="#8A949B" d="M0.2 6.6L6.5 0.3V6.6Z"/><path d="M14.3 11L17.5 12.3L20 16.3V20.8L18 22.8H12L8 18L9.6 13.5Z" fill="var(--bg,#3C3F41)" stroke="var(--bg,#3C3F41)" stroke-width="2.2" stroke-linejoin="round"/><path d="M14.3 11L17.5 12.3L20 16.3V20.8L18 22.8H12L8 18L9.6 13.5Z" fill="#6DB1EC"/><path d="M11.3 13.1L15.2 11.3L18 12.5L20 16V20.6L19.3 21.4Z" fill="#4A6EAB"/></svg>
<div class="t" style="left:917px;top:45.5px;color:#6897BB;transform:scaleX(0.981);transform-origin:0 0">Section_Model.dart</div>
<svg style="left:1079px;top:53.5px" width="13" height="13"><path d="M0.8 0.8L12.2 12.2M12.2 0.8L0.8 12.2" stroke="#6B6D6F" stroke-width="1.25"/></svg>
<svg style="left:1117px;top:49px" width="22" height="24"><path fill="#8A949B" d="M7.3 0.3H15.8V21.6H0V7.6H7.3Z"/><path fill="#8A949B" d="M0.2 6.6L6.5 0.3V6.6Z"/><path d="M14.3 11L17.5 12.3L20 16.3V20.8L18 22.8H12L8 18L9.6 13.5Z" fill="var(--bg,#3C3F41)" stroke="var(--bg,#3C3F41)" stroke-width="2.2" stroke-linejoin="round"/><path d="M14.3 11L17.5 12.3L20 16.3V20.8L18 22.8H12L8 18L9.6 13.5Z" fill="#6DB1EC"/><path d="M11.3 13.1L15.2 11.3L18 12.5L20 16V20.6L19.3 21.4Z" fill="#4A6EAB"/></svg>
<div class="t" style="left:1143px;top:45.5px;color:#6897BB;transform:scaleX(0.948);transform-origin:0 0">Search.dart</div>
<svg style="left:1241px;top:53.5px" width="13" height="13"><path d="M0.8 0.8L12.2 12.2M12.2 0.8L0.8 12.2" stroke="#6B6D6F" stroke-width="1.25"/></svg>
<svg style="left:1279px;top:49px" width="22" height="24"><path fill="#8A949B" d="M7.3 0.3H15.8V21.6H0V7.6H7.3Z"/><path fill="#8A949B" d="M0.2 6.6L6.5 0.3V6.6Z"/><path d="M14.3 11L17.5 12.3L20 16.3V20.8L18 22.8H12L8 18L9.6 13.5Z" fill="var(--bg,#3C3F41)" stroke="var(--bg,#3C3F41)" stroke-width="2.2" stroke-linejoin="round"/><path d="M14.3 11L17.5 12.3L20 16.3V20.8L18 22.8H12L8 18L9.6 13.5Z" fill="#6DB1EC"/><path d="M11.3 13.1L15.2 11.3L18 12.5L20 16V20.6L19.3 21.4Z" fill="#4A6EAB"/></svg>
<div class="t" style="left:1305px;top:45.5px;color:#6897BB">Cart.dart</div>
<svg style="left:1384px;top:53.5px" width="13" height="13"><path d="M0.8 0.8L12.2 12.2M12.2 0.8L0.8 12.2" stroke="#6B6D6F" stroke-width="1.25"/></svg>
<svg style="left:1422px;top:49px" width="22" height="24"><path fill="#8A949B" d="M7.3 0.3H15.8V21.6H0V7.6H7.3Z"/><path fill="#8A949B" d="M0.2 6.6L6.5 0.3V6.6Z"/><path d="M14.3 11L17.5 12.3L20 16.3V20.8L18 22.8H12L8 18L9.6 13.5Z" fill="var(--bg,#3C3F41)" stroke="var(--bg,#3C3F41)" stroke-width="2.2" stroke-linejoin="round"/><path d="M14.3 11L17.5 12.3L20 16.3V20.8L18 22.8H12L8 18L9.6 13.5Z" fill="#6DB1EC"/><path d="M11.3 13.1L15.2 11.3L18 12.5L20 16V20.6L19.3 21.4Z" fill="#4A6EAB"/></svg>
<div class="t" style="left:1448px;top:45.5px;color:#6897BB">Constant.dart</div>
<svg style="left:1565px;top:53.5px" width="13" height="13"><path d="M0.8 0.8L12.2 12.2M12.2 0.8L0.8 12.2" stroke="#6B6D6F" stroke-width="1.25"/></svg>
<svg style="left:1603px;top:49px;--bg:#4E5254" width="22" height="24"><path fill="#8A949B" d="M7.3 0.3H15.8V21.6H0V7.6H7.3Z"/><path fill="#8A949B" d="M0.2 6.6L6.5 0.3V6.6Z"/><path d="M14.3 11L17.5 12.3L20 16.3V20.8L18 22.8H12L8 18L9.6 13.5Z" fill="var(--bg,#3C3F41)" stroke="var(--bg,#3C3F41)" stroke-width="2.2" stroke-linejoin="round"/><path d="M14.3 11L17.5 12.3L20 16.3V20.8L18 22.8H12L8 18L9.6 13.5Z" fill="#6DB1EC"/><path d="M11.3 13.1L15.2 11.3L18 12.5L20 16V20.6L19.3 21.4Z" fill="#4A6EAB"/></svg>
<div class="t" style="left:1629px;top:45.5px;color:#6897BB">String.dart</div>
<svg style="left:1722px;top:53.5px" width="13" height="13"><path d="M0.8 0.8L12.2 12.2M12.2 0.8L0.8 12.2" stroke="#6B6D6F" stroke-width="1.25"/></svg>
<svg style="left:1760px;top:49px" width="22" height="24"><path fill="#8A949B" d="M7.3 0.3H15.8V21.6H0V7.6H7.3Z"/><path fill="#8A949B" d="M0.2 6.6L6.5 0.3V6.6Z"/><path d="M14.3 11L17.5 12.3L20 16.3V20.8L18 22.8H12L8 18L9.6 13.5Z" fill="var(--bg,#3C3F41)" stroke="var(--bg,#3C3F41)" stroke-width="2.2" stroke-linejoin="round"/><path d="M14.3 11L17.5 12.3L20 16.3V20.8L18 22.8H12L8 18L9.6 13.5Z" fill="#6DB1EC"/><path d="M11.3 13.1L15.2 11.3L18 12.5L20 16V20.6L19.3 21.4Z" fill="#4A6EAB"/></svg>
<div class="t" style="left:1787px;top:45.5px;color:#6897BB">Colo</div>
<svg style="left:1842.5px;top:61px" width="8" height="6"><path d="M0 0H7.5L3.75 5.2Z" fill="#AFB1B3"/></svg>
<svg style="left:1852.5px;top:56px" width="13" height="13"><path d="M0 2H12.5M0 5.3H12.5M0 8.6H12.5M0 11.9H12.5" stroke="#C4C4C4" stroke-width="1.8"/></svg>
<div class="a" style="left:1867.5px;top:54px;font-size:13px;line-height:16px;color:#BBBBBB">2</div>
</body></html>
